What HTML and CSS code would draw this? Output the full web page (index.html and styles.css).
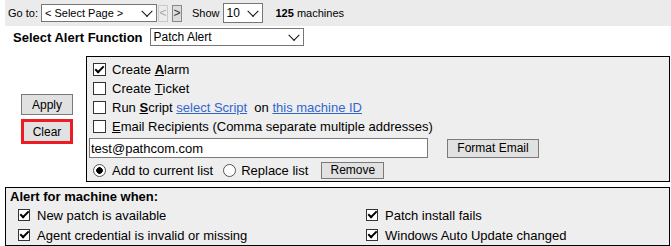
FILE: index.html
```html
<!DOCTYPE html>
<html>
<head>
    <meta charset="utf-8">
    <title>Patch Alert</title>
    <link rel="stylesheet" href="styles.css">
</head>
<body>

<div class="pager">
    <span>Go to:</span>
    <span class="dropdown page-drop">
        <select class="page-select"><option>&lt; Select Page &gt;</option></select>
    </span>
    <button class="nav" disabled>&lt;</button>
    <button class="nav nav-next">&gt;</button>
    <span class="show">Show</span>
    <span class="dropdown size-drop">
        <select class="size-select"><option>10</option></select>
    </span>
    <span class="count"><b>125</b> machines</span>
</div>

<div class="func-row">
    <label class="func-label">Select Alert Function</label>
    <span class="dropdown func-drop">
        <select class="func-select"><option>Patch Alert</option></select>
    </span>
</div>

<div class="main">
    <div class="actions">
        <button class="btn">Apply</button>
        <button class="btn btn-clear">Clear</button>
    </div>
    <div class="options">
        <label class="opt"><input type="checkbox" checked>Create&nbsp;<u><b>A</b></u>larm</label>
        <label class="opt"><input type="checkbox">Create&nbsp;<u>T</u>icket</label>
        <div class="opt"><input type="checkbox">Run&nbsp;<u><b>S</b></u>cript&nbsp;<a href="#">select Script</a>&nbsp;&nbsp;on&nbsp;<a href="#">this machine ID</a></div>
        <label class="opt"><input type="checkbox"><u>E</u>mail Recipients (Comma separate multiple addresses)</label>
        <div class="email-row">
            <input type="text" class="email" value="test@pathcom.com">
            <button class="btn btn-format">Format Email</button>
        </div>
        <div class="radio-row">
            <input type="radio" name="mode" checked>Add to current list
            <input type="radio" name="mode" class="radio-2">Replace list
            <button class="btn btn-remove">Remove</button>
        </div>
    </div>
</div>

<div class="conditions">
    <div class="cond-title">Alert for machine when:</div>
    <div class="cond-grid">
        <label class="cond"><input type="checkbox" checked>New patch is available</label>
        <label class="cond"><input type="checkbox" checked>Patch install fails</label>
        <label class="cond"><input type="checkbox" checked>Agent credential is invalid or missing</label>
        <label class="cond"><input type="checkbox" checked>Windows Auto Update changed</label>
    </div>
</div>

</body>
</html>
```

FILE: styles.css
```css
* {
    box-sizing: border-box;
}

body {
    margin: 0 0 0 5px;
    font-family: "Liberation Sans", Arial, sans-serif;
    font-size: 13px;
    color: #000;
    background: #fff;
}

/* top paging bar */
.pager {
    height: 26px;
    background: #ebebeb;
    display: flex;
    align-items: center;
    padding-left: 3px;
    font-size: 11px;
}

.dropdown {
    position: relative;
    display: inline-block;
}

.dropdown::after {
    content: "";
    position: absolute;
    right: 6px;
    top: 50%;
    width: 7px;
    height: 7px;
    border: solid #111;
    border-width: 0 1.6px 1.6px 0;
    transform: translateY(-72%) rotate(45deg);
    pointer-events: none;
}

.dropdown select {
    appearance: none;
    -webkit-appearance: none;
    display: block;
    border: 1px solid #767676;
    border-radius: 0;
    background: #fff;
    color: #000;
    font-family: "Liberation Sans", Arial, sans-serif;
    padding: 0 0 0 3px;
    margin: 0;
}

.page-drop {
    margin-left: 3px;
}

.page-select {
    width: 116px;
    height: 18px;
    font-size: 11px;
}

.nav {
    width: 10px;
    height: 17px;
    padding: 0;
    margin-left: 1px;
    font-family: "Liberation Sans", Arial, sans-serif;
    font-size: 12px;
    line-height: 15px;
    border: 1px solid #888;
    background: #dcdcdc;
    color: #333;
    border-radius: 0;
}

.nav:disabled {
    border-color: #c9c9c9;
    background: #ececec;
    color: #a8a8a8;
}

.nav-next {
    margin-left: 4px;
}

.show {
    margin-left: 10px;
}

.size-drop {
    margin-left: 3px;
}

.size-select {
    width: 40px;
    height: 20px;
    font-size: 12px;
}

.count {
    margin-left: 13px;
}

/* alert function */
.func-row {
    display: flex;
    align-items: center;
    height: 18px;
    margin-top: 2px;
    padding-left: 8px;
}

.func-label {
    font-weight: bold;
}

.func-drop {
    margin-left: 7px;
}

.func-select {
    width: 154px;
    height: 18px;
    font-size: 12px;
}

/* main options */
.main {
    display: flex;
    align-items: center;
    margin: 10px 1px 0 0;
}

.actions {
    width: 81px;
    display: flex;
    flex-direction: column;
    align-items: flex-start;
    gap: 4px;
    padding-left: 16px;
}

.btn {
    font-family: "Liberation Sans", Arial, sans-serif;
    font-size: 12px;
    color: #000;
    background: #e1e1e1;
    border: 1px solid #7a7a7a;
    border-radius: 0;
    padding: 0;
    width: 52px;
    height: 21px;
}

.btn-clear {
    border: 3px solid #ed1c24;
    height: 25px;
}

.options {
    flex: 1;
    border: 1px solid #000;
    background: #eee;
    padding: 3px 2px 1px;
}

.opt {
    display: flex;
    align-items: center;
    height: 19px;
    white-space: nowrap;
}

input[type=checkbox] {
    appearance: none;
    -webkit-appearance: none;
    position: relative;
    width: 13px;
    height: 13px;
    margin: 0 6px 0 4px;
    border: 1px solid #333;
    background: #fff;
    flex: none;
}

input[type=checkbox]:checked::after {
    content: "";
    position: absolute;
    left: 3px;
    top: 0;
    width: 3px;
    height: 7px;
    border: solid #000;
    border-width: 0 2px 2px 0;
    transform: rotate(45deg);
}

.opt a {
    color: #3366cc;
}

.email-row {
    display: flex;
    align-items: center;
    margin-top: 2px;
}

.email {
    width: 339px;
    height: 20px;
    border: 1px solid #7a7a7a;
    border-radius: 0;
    padding: 0 1px;
    margin: 0;
    font-family: "Liberation Sans", Arial, sans-serif;
    font-size: 13px;
    color: #000;
}

.btn-format {
    margin-left: 19px;
    width: 92px;
    height: 19px;
}

.radio-row {
    display: flex;
    align-items: center;
    height: 20px;
    margin-top: 2px;
    white-space: nowrap;
}

input[type=radio] {
    appearance: none;
    -webkit-appearance: none;
    width: 13px;
    height: 13px;
    margin: 0 6px 0 4px;
    border: 1px solid #555;
    border-radius: 50%;
    background: #fff;
    flex: none;
}

input[type=radio]:checked {
    background: radial-gradient(circle, #000 0, #000 3px, #fff 3.6px);
}

.radio-2 {
    margin: 0 5px 0 10px !important;
}

.btn-remove {
    margin-left: 13px;
    width: 63px;
    height: 17px;
}

/* conditions box */
.conditions {
    margin: 5px 1px 0 0;
    border: 1px solid #000;
    background: #eee;
}

.cond-title {
    font-weight: bold;
    line-height: 17px;
    padding-left: 4px;
}

.cond-grid {
    display: grid;
    grid-template-columns: 348px auto;
    grid-auto-rows: 20px;
    padding-left: 12px;
}

.cond {
    display: flex;
    align-items: center;
    white-space: nowrap;
}

.cond input[type=checkbox] {
    width: 12px;
    height: 12px;
    margin: 0 7px 0 0;
}

.cond input[type=checkbox]:checked::after {
    left: 3px;
    top: -1px;
}
```
